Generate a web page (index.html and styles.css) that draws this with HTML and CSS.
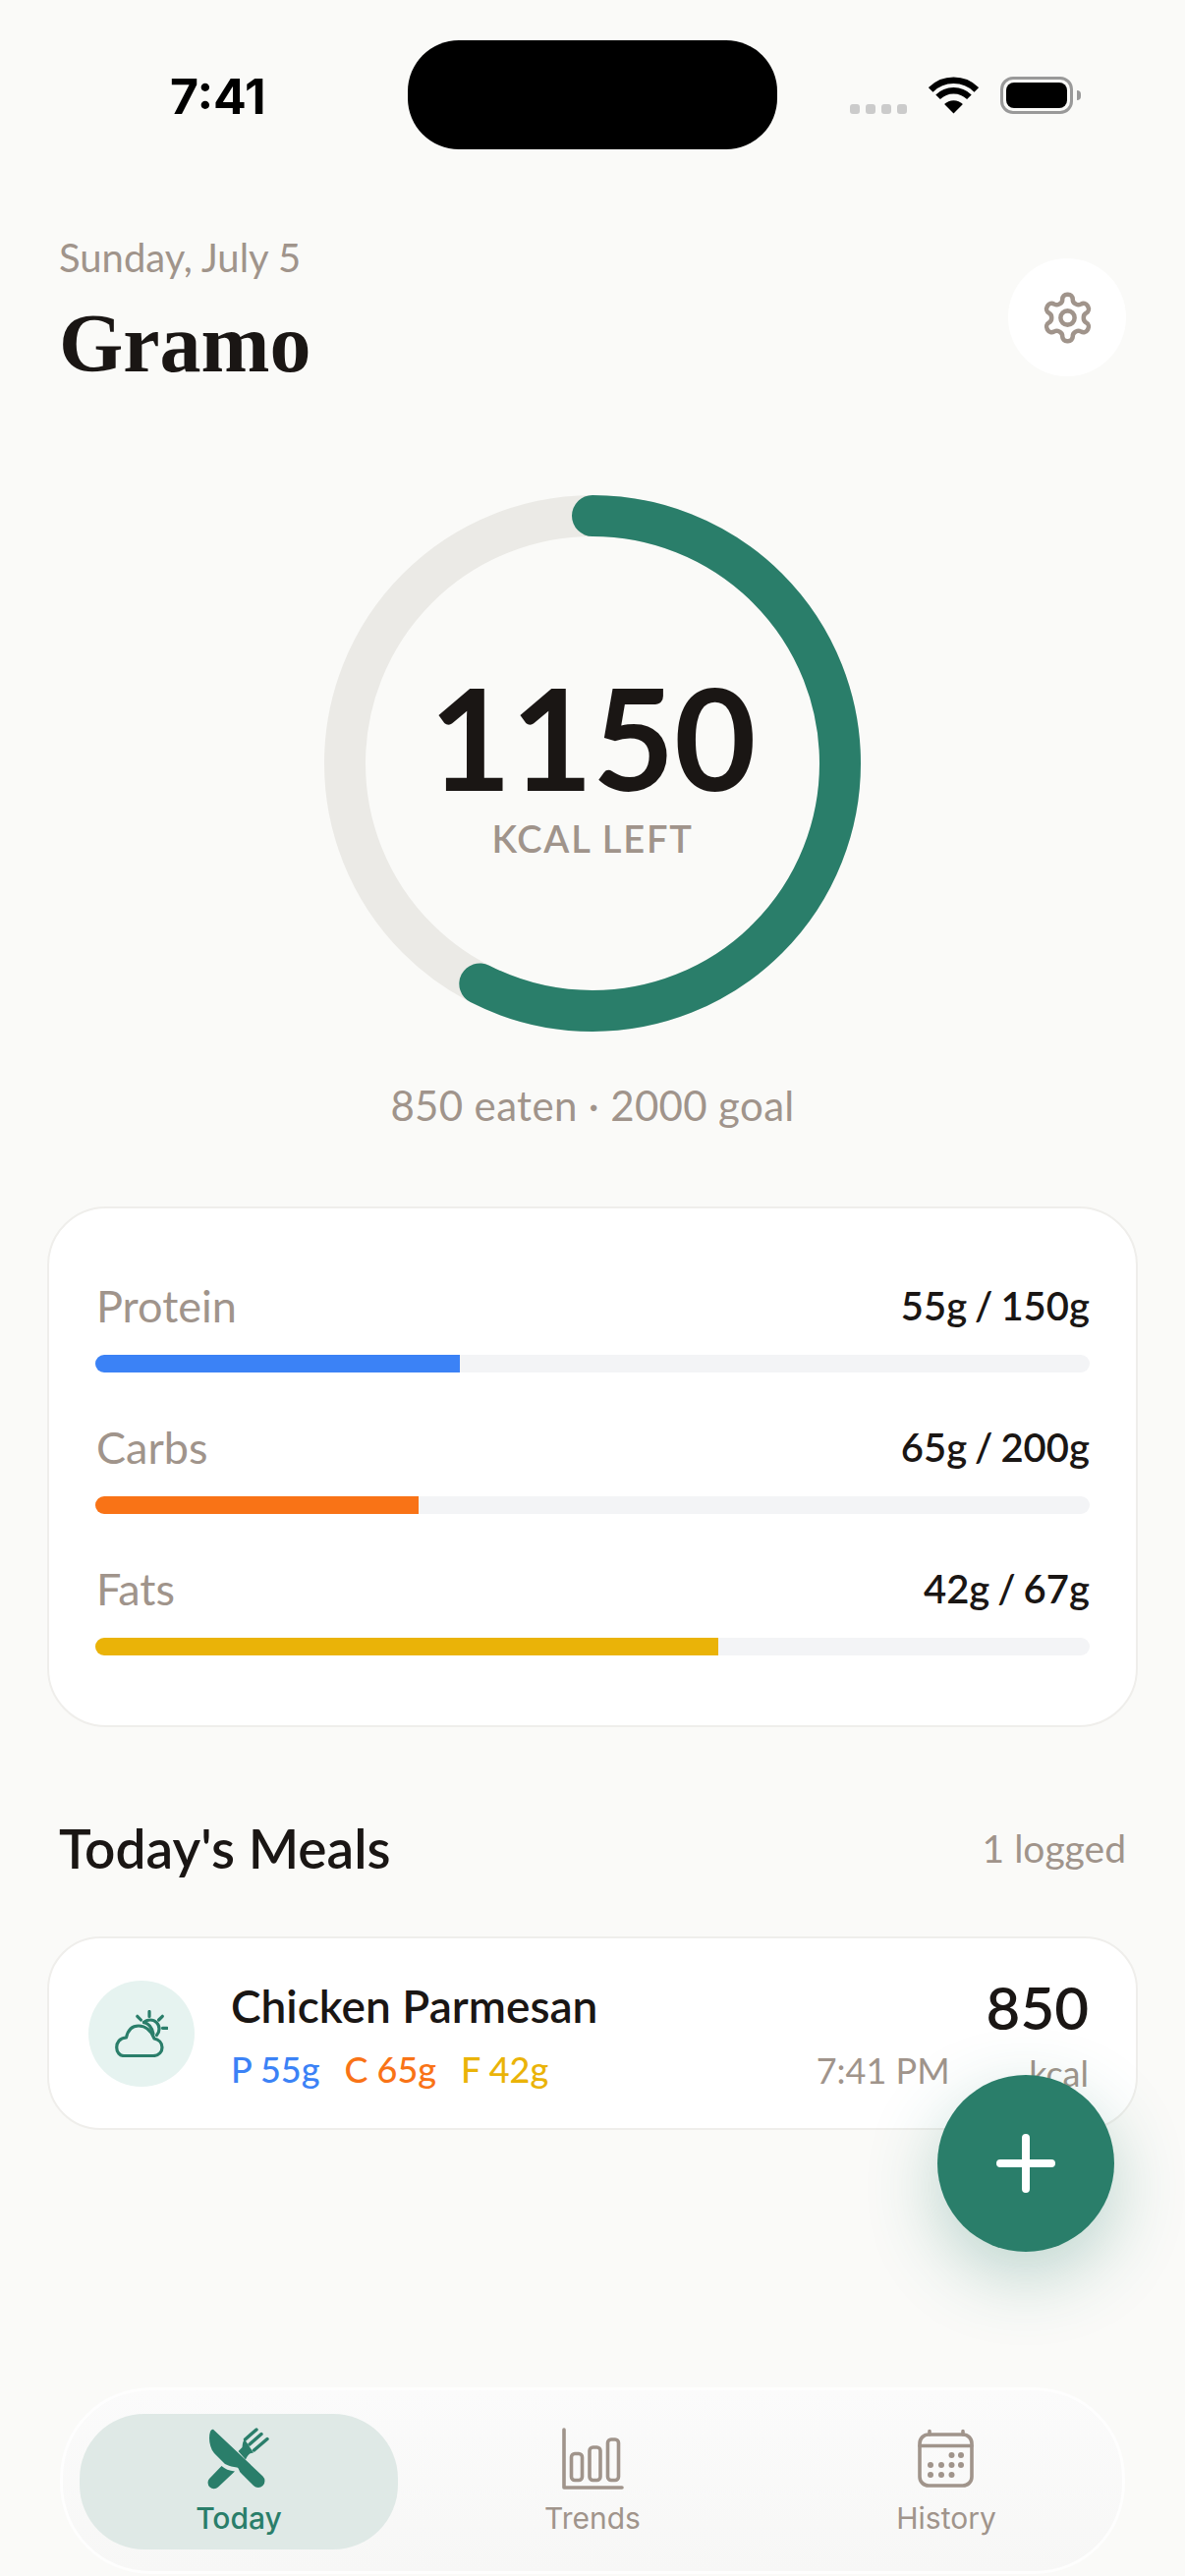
FILE: index.html
```html
<!DOCTYPE html>
<html lang="en">
<head>
    <meta charset="UTF-8">
    <meta name="viewport" content="width=device-width, initial-scale=1.0">
    <title>Gramo</title>
    <link rel="stylesheet" href="styles.css">
</head>
<body>

<div class="status-bar">
    <div class="status-time">7:41</div>
    <div class="island"></div>
    <div class="status-icons">
        <div class="signal"><span></span><span></span><span></span><span></span></div>
        <svg class="wifi" width="51" height="38" viewBox="0 0 51 38">
            <path d="M2.2 13.4a33 33 0 0 1 46.6 0M9.6 20.8a22.5 22.5 0 0 1 31.8 0" fill="none" stroke="#000" stroke-width="6.5"/>
            <path d="M25.5 37.5l-9.4-9.4a13.3 13.3 0 0 1 18.8 0z" fill="#000"/>
        </svg>
        <div class="battery"><div class="battery-level"></div></div>
        <div class="battery-tip"></div>
    </div>
</div>

<main>
    <header class="page-head">
        <div>
            <div class="date">Sunday, July 5</div>
            <h1 class="title">Gramo</h1>
        </div>
        <button class="settings">
            <svg width="57" height="57" viewBox="0 0 24 24" fill="none" stroke="#A0948B" stroke-width="1.9" stroke-linecap="round" stroke-linejoin="round">
                <path d="M12.22 2h-.44a2 2 0 0 0-2 2v.18a2 2 0 0 1-1 1.73l-.43.25a2 2 0 0 1-2 0l-.15-.08a2 2 0 0 0-2.73.73l-.22.38a2 2 0 0 0 .73 2.73l.15.1a2 2 0 0 1 1 1.72v.51a2 2 0 0 1-1 1.74l-.15.09a2 2 0 0 0-.73 2.73l.22.38a2 2 0 0 0 2.73.73l.15-.08a2 2 0 0 1 2 0l.43.25a2 2 0 0 1 1 1.73V20a2 2 0 0 0 2 2h.44a2 2 0 0 0 2-2v-.18a2 2 0 0 1 1-1.73l.43-.25a2 2 0 0 1 2 0l.15.08a2 2 0 0 0 2.73-.73l.22-.39a2 2 0 0 0-.73-2.73l-.15-.08a2 2 0 0 1-1-1.74v-.5a2 2 0 0 1 1-1.74l.15-.09a2 2 0 0 0 .73-2.73l-.22-.38a2 2 0 0 0-2.73-.73l-.15.08a2 2 0 0 1-2 0l-.43-.25a2 2 0 0 1-1-1.73V4a2 2 0 0 0-2-2z"/>
                <circle cx="12" cy="12" r="3"/>
            </svg>
        </button>
    </header>

    <section class="ring-wrap">
        <svg class="ring" width="546" height="546" viewBox="0 0 546 546">
            <circle cx="273" cy="273" r="252" fill="none" stroke="#EBEAE6" stroke-width="42"/>
            <circle cx="273" cy="273" r="252" fill="none" stroke="#2A7E6A" stroke-width="42" stroke-linecap="round" stroke-dasharray="910.4 1583.4" transform="rotate(-90 273 273)"/>
        </svg>
        <div class="ring-text">
            <div class="ring-num">1150</div>
            <div class="ring-label">KCAL LEFT</div>
        </div>
    </section>
    <p class="ring-sub">850 eaten · 2000 goal</p>

    <section class="card macros">
        <div class="macro">
            <div class="macro-row"><span class="macro-name">Protein</span><span class="macro-val">55g / 150g</span></div>
            <div class="track"><div class="fill fill-p" style="width: 36.67%"></div></div>
        </div>
        <div class="macro">
            <div class="macro-row"><span class="macro-name">Carbs</span><span class="macro-val">65g / 200g</span></div>
            <div class="track"><div class="fill fill-c" style="width: 32.5%"></div></div>
        </div>
        <div class="macro">
            <div class="macro-row"><span class="macro-name">Fats</span><span class="macro-val">42g / 67g</span></div>
            <div class="track"><div class="fill fill-f" style="width: 62.69%"></div></div>
        </div>
    </section>

    <div class="section-head">
        <h2>Today's Meals</h2>
        <span class="logged">1 logged</span>
    </div>

    <section class="card meal">
        <div class="meal-icon">
            <svg width="54" height="48" viewBox="0 0 54 48" fill="none" stroke="#2A7E6A" stroke-width="3.2" stroke-linecap="round" stroke-linejoin="round">
                <path d="M9 46.5H39C45 46.5 48 42 48 38C48 33.500 44.500 30 40 29C37 21 31 16 24 16C17 16 13 21 11.500 28C5 28 1.700 33 1.700 38C1.700 43 5 46.500 9 46.500Z"/>
                <path d="M29.500 12.500C31 10.800 33.500 10 36 10C41 10 45 14 45 19C45 21.500 44 23.800 42.500 25.500"/>
                <path d="M29.500 12.500C34 13.500 37.500 17 39 24"/>
                <path d="M35 1.500V6.500M22.800 6.300L26.400 10M48.300 6.300L44.600 10M48.500 18.300H53"/>
            </svg>
        </div>
        <div class="meal-info">
            <div class="meal-name">Chicken Parmesan</div>
            <div class="meal-macros">
                <span class="txt-p">P 55g</span>
                <span class="txt-c">C 65g</span>
                <span class="txt-f">F 42g</span>
            </div>
        </div>
        <div class="meal-time">7:41 PM</div>
        <div class="meal-kcal">
            <div class="kcal-num">850</div>
            <div class="kcal-unit">kcal</div>
        </div>
    </section>
</main>

<button class="fab">
    <svg width="60" height="60" viewBox="0 0 60 60" fill="none" stroke="#fff" stroke-width="8" stroke-linecap="round">
        <path d="M30 4V56M4 30H56"/>
    </svg>
</button>

<nav class="tabbar">
    <div class="tab tab-active">
        <svg width="64" height="64" viewBox="0 0 64 64" fill="#2A7E6A">
            <path d="M6.500 2.200L56.500 49.500A6.500 6.500 0 0 1 47 59L34 46C32 44 32.500 41 30 40.500C26 40 23 39.500 18 37L7 26C2 20 1 10 3 4C4 2 5.500 1.300 6.500 2.200Z"/>
            <path d="M14.500 39C18 42 22 44 28 44.500L11 60.500A6.200 6.200 0 0 1 2 52Z"/>
            <path d="M31.500 24L35.500 20C36 16 36 14 38 12L47 25.500C43 26 42 27 39 32.500Z"/>
            <path d="M38.500 12L50 2M43 17L55 6.500M47.500 23L61 11.500" fill="none" stroke="#2A7E6A" stroke-width="3.400" stroke-linecap="round"/>
        </svg>
        <span>Today</span>
    </div>
    <div class="tab">
        <svg width="64" height="64" viewBox="0 0 64 64" fill="none" stroke="#A0948B" stroke-width="3.600" stroke-linecap="round" stroke-linejoin="round">
            <path d="M3 2V61H62"/>
            <rect x="10.500" y="26.500" width="11" height="27" rx="3.500"/>
            <rect x="29" y="20" width="11" height="33.500" rx="3.500"/>
            <rect x="47.500" y="12" width="11" height="41.500" rx="3.500"/>
        </svg>
        <span>Trends</span>
    </div>
    <div class="tab">
        <svg width="64" height="64" viewBox="0 0 64 64" fill="none" stroke="#A0948B" stroke-width="3.600" stroke-linecap="round">
            <rect x="5" y="7" width="53" height="52" rx="9"/>
            <path d="M5 18.500H58M15 3.500V7M49 3.500V7"/>
            <g fill="#A0948B" stroke="none">
                <circle cx="37.500" cy="28" r="3"/><circle cx="47" cy="28" r="3"/>
                <circle cx="16" cy="38" r="3"/><circle cx="27" cy="38" r="3"/><circle cx="37.500" cy="38" r="3"/><circle cx="47" cy="38" r="3"/>
                <circle cx="16" cy="48" r="3"/><circle cx="27" cy="48" r="3"/><circle cx="37.500" cy="48" r="3"/>
            </g>
        </svg>
        <span>History</span>
    </div>
</nav>

</body>
</html>
```

FILE: styles.css
```css
* {
    box-sizing: border-box;
}
body {
    margin: 0;
    width: 1206px;
    height: 2622px;
    overflow: hidden;
    display: flex;
    flex-direction: column;
    position: relative;
    background-color: #FAFAF8;
    font-family: "Lato", sans-serif;
    color: #1A1614;
}
h1, h2, p {
    margin: 0;
}
button {
    border: none;
    padding: 0;
}

/* status bar */
.status-bar {
    display: grid;
    grid-template-columns: 415px 376px 415px;
    margin-top: 41px;
    height: 111px;
    flex-shrink: 0;
}
.status-time {
    padding-left: 173px;
    padding-top: 32px;
    font-family: "Inter", sans-serif;
    font-weight: 700;
    font-size: 50px;
    line-height: 50px;
    color: #000;
}
.island {
    background-color: #000;
    border-radius: 52px;
}
.status-icons {
    display: flex;
    align-items: flex-end;
    padding: 0 0 36px 74px;
}
.signal {
    display: flex;
    gap: 6px;
    margin-right: 22px;
}
.signal span {
    width: 10px;
    height: 10px;
    border-radius: 3px;
    background-color: #CBCBCB;
}
.wifi {
    margin-right: 22px;
}
.battery {
    width: 74px;
    height: 38px;
    padding: 3px;
    border: 3px solid #999;
    border-radius: 13px;
}
.battery-level {
    width: 100%;
    height: 100%;
    background-color: #000;
    border-radius: 8px;
}
.battery-tip {
    width: 4px;
    height: 10px;
    margin: 0 0 14px 4px;
    background-color: #999;
    border-radius: 0 4px 4px 0;
}

main {
    flex: 1;
    padding: 0 48px;
}

/* header */
.page-head {
    display: flex;
    justify-content: space-between;
    align-items: flex-start;
    padding: 84px 12px 0;
}
.date {
    margin-top: 4px;
    font-size: 40px;
    line-height: 44px;
    color: #A0948B;
}
.title {
    margin-top: 18px;
    font-family: "Liberation Serif", serif;
    font-weight: 700;
    font-size: 84px;
    line-height: 96px;
    color: #1A1614;
}
.settings {
    width: 120px;
    height: 120px;
    margin-top: 27px;
    border-radius: 50%;
    background-color: #fff;
    display: flex;
    align-items: center;
    justify-content: center;
}

/* calorie ring */
.ring-wrap {
    display: grid;
    justify-items: center;
    align-items: center;
    margin-top: 106px;
}
.ring, .ring-text {
    grid-area: 1 / 1;
}
.ring-text {
    text-align: center;
    padding-top: 12px;
}
.ring-num {
    font-weight: 700;
    font-size: 144px;
    line-height: 120px;
    letter-spacing: -0.5px;
}
.ring-label {
    margin-top: 19px;
    font-weight: 600;
    font-size: 38px;
    line-height: 48px;
    letter-spacing: 1.8px;
    color: #A0948B;
}
.ring-sub {
    margin-top: 48px;
    text-align: center;
    font-size: 42px;
    line-height: 54px;
    letter-spacing: 0.35px;
    color: #A0948B;
}

/* cards */
.card {
    background-color: #fff;
    border: 2px solid #EFEEEB;
}
.macros {
    margin-top: 76px;
    height: 530px;
    padding: 72px 47px 0;
    border-radius: 60px;
}
.macro {
    margin-bottom: 49px;
}
.macro-row {
    display: flex;
    justify-content: space-between;
    align-items: center;
    height: 54px;
    margin-bottom: 23px;
    padding-left: 1px;
}
.macro-name {
    font-size: 45px;
    color: #A0948B;
}
.macro-val {
    font-weight: 600;
    font-size: 40px;
    word-spacing: -2px;
}
.track {
    height: 18px;
    border-radius: 9px;
    background-color: #F3F4F6;
    overflow: hidden;
}
.fill {
    height: 100%;
}
.fill-p { background-color: #3B82F6; }
.fill-c { background-color: #F97316; }
.fill-f { background-color: #EAB308; }

.section-head {
    display: flex;
    justify-content: space-between;
    align-items: center;
    margin-top: 90px;
    padding: 0 12px;
}
.section-head h2 {
    font-weight: 600;
    font-size: 55px;
    line-height: 66px;
}
.logged {
    font-size: 39px;
    color: #A0948B;
}

/* meal row */
.meal {
    display: flex;
    align-items: center;
    margin-top: 57px;
    height: 197px;
    padding: 0 48px 0 40px;
    border-radius: 54px;
}
.meal-icon {
    width: 108px;
    height: 108px;
    flex-shrink: 0;
    margin-right: 37px;
    border-radius: 50%;
    background-color: #E6F3F0;
    display: flex;
    align-items: center;
    justify-content: center;
}
.meal-info {
    flex: 1;
    padding-top: 4px;
}
.meal-name {
    font-weight: 600;
    font-size: 46px;
    line-height: 56px;
}
.meal-macros {
    display: flex;
    gap: 25px;
    margin-top: 12px;
    font-size: 36px;
    font-weight: 500;
    line-height: 48px;
}
.txt-p { color: #3B82F6; }
.txt-c { color: #F97316; }
.txt-f { color: #EAB308; }
.meal-time {
    align-self: flex-end;
    margin: 0 37px 35px 0;
    font-size: 36px;
    line-height: 48px;
    color: #A0948B;
}
.meal-kcal {
    text-align: right;
}
.kcal-num {
    font-weight: 600;
    font-size: 60px;
    line-height: 68px;
    margin-top: 2px;
}
.kcal-unit {
    margin-top: 11px;
    font-size: 36px;
    line-height: 44px;
    color: #A0948B;
}

/* floating add button */
.fab {
    position: absolute;
    right: 72px;
    bottom: 330px;
    width: 180px;
    height: 180px;
    border-radius: 50%;
    background-color: #2A7E6A;
    box-shadow: 0 24px 72px rgba(43, 127, 107, 0.3);
    display: flex;
    align-items: center;
    justify-content: center;
}

/* bottom tabs */
.tabbar {
    display: flex;
    gap: 36px;
    flex-shrink: 0;
    width: 1084px;
    height: 190px;
    margin: 0 0 2px 61px;
    padding: 24px 17px;
    border: 3px solid rgba(255, 255, 255, 0.8);
    border-radius: 92px;
    background: linear-gradient(180deg, #FBFBFB, #F7F7F6);
}
.tab {
    width: 324px;
    height: 138px;
    border-radius: 66px;
    display: flex;
    flex-direction: column;
    align-items: center;
    padding-top: 14px;
    font-family: "Inter", sans-serif;
    font-size: 30px;
    line-height: 36px;
    color: #A0948B;
}
.tab svg {
    margin-bottom: 10px;
}
.tab-active {
    background-color: #DFE9E6;
    color: #2A7E6A;
    font-weight: 500;
}
```
